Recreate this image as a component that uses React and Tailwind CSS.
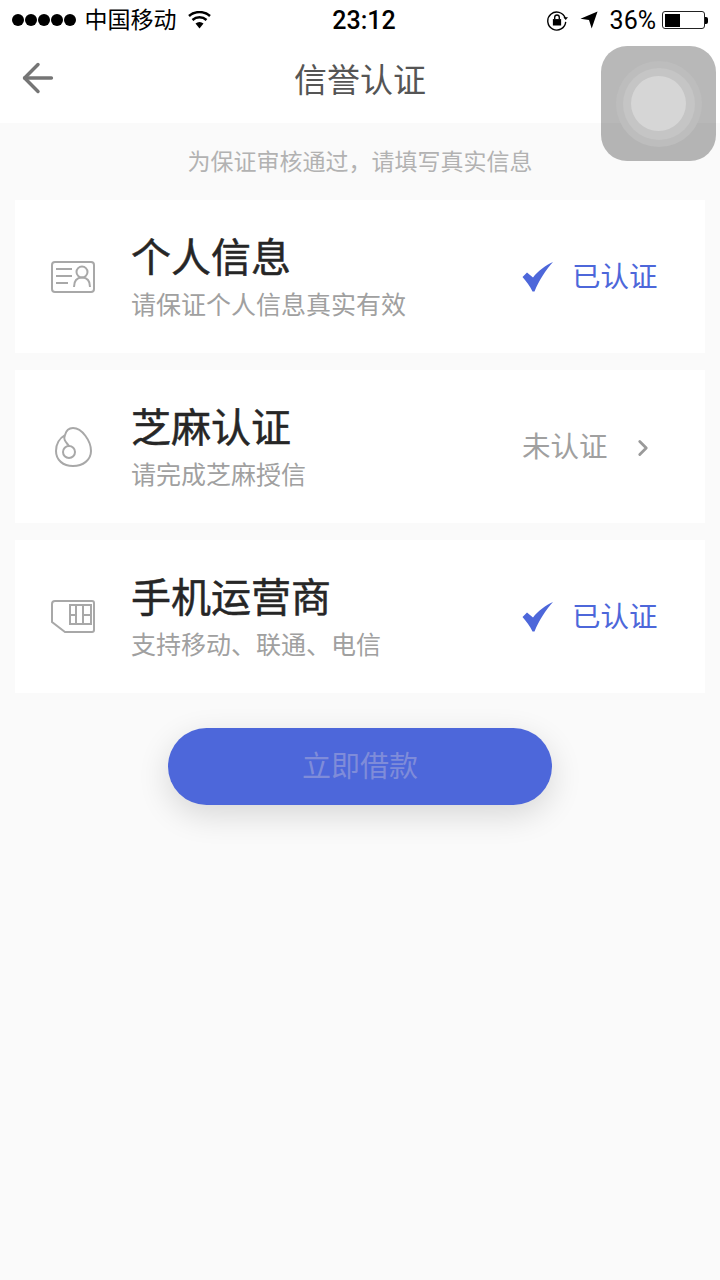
import React from "react";
import { ArrowLeft, ChevronRight } from "lucide-react";

const cjk = "font-['Roboto','Noto_Sans_CJK_SC',sans-serif]";

const IdIcon = () => (
  <svg width="44" height="32" viewBox="0 0 44 32" fill="none" stroke="#a8a8a8" strokeWidth="2">
    <rect x="1" y="1" width="42" height="30" rx="3" />
    <path d="M5 8h16M5 15h16M5 22h12" />
    <circle cx="31" cy="11" r="5.500" />
    <path d="M23 26c0-6 3-9.500 8-9.500s8 3.500 8 9.500" />
  </svg>
);

const SesameIcon = () => (
  <svg width="37" height="40" viewBox="0 0 37 40" fill="none" stroke="#a8a8a8" strokeWidth="2">
    <path d="M10 8C11 4 14 1 18 1C27 1 36 14 36 24C36 33 28 39 18 39C8 39 1 33 1 24C1 17 5 11 10 8C8 13 11 15 14 19" />
    <circle cx="14" cy="25" r="6" />
  </svg>
);

const SimIcon = () => (
  <svg width="44" height="33" viewBox="0 0 44 33" fill="none" stroke="#a8a8a8" strokeWidth="2">
    <path d="M4 1h37a2 2 0 0 1 2 2v27a2 2 0 0 1-2 2H14L1 22V4a3 3 0 0 1 3-3z" />
    <path d="M19 5h21v19H19zM25 5v19M32 5v19M19 15h6M32 15h8" />
  </svg>
);

const CheckIcon = () => (
  <svg className="-mt-[3px]" width="32" height="30" viewBox="0 0 32 30">
    <path d="M0.500 15L5 10.500L11 15.500C16 9 24 3 31 0C24 8 17 18 12.500 29.500L10.500 29.500C8 24 4 19 0.500 15z" fill="#4d67da" />
  </svg>
);

const Row = ({ icon, title, desc, done }) => (
  <div className="flex h-[153px] items-center bg-white">
    <div className="flex w-[116px] justify-center">{icon}</div>
    <div className="flex-1 pt-[2px]">
      <div className="text-[40px] leading-[50px] text-[#262626] [-webkit-text-stroke:0.5px_#262626]">{title}</div>
      <div className="mt-[7px] text-[25px] leading-[30px] text-[#a0a0a0]">{desc}</div>
    </div>
    {done ? (
      <div className="flex w-[183px] items-center pt-[3px]">
        <CheckIcon />
        <span className="ml-[18px] text-[28.500px] text-[#4d67da]">已认证</span>
      </div>
    ) : (
      <div className="flex w-[183px] items-center pt-[3px]">
        <span className="text-[28.500px] text-[#a0a0a0]">未认证</span>
        <ChevronRight className="ml-[22px]" size={26} color="#9a9a9a" strokeWidth={2.600} />
      </div>
    )}
  </div>
);

export default function App() {
  return (
    <div className={`relative flex min-h-[1280px] flex-col bg-[#fafafa] ${cjk}`}>
      {/* Status bar */}
      <div className="flex h-[40px] items-center justify-between bg-white px-[12px] text-black">
        <div className="flex w-[264px] items-center">
          <div className="flex gap-[1.500px]">
            {[0, 1, 2, 3, 4].map((i) => (
              <span key={i} className="h-[11.500px] w-[11.500px] rounded-full bg-black" />
            ))}
          </div>
          <span className="ml-[9px] text-[23px] leading-none">中国移动</span>
          <svg className="ml-[10px]" width="25" height="18" viewBox="0 0 25 18">
            <path d="M12.500 17.500L8.500 12.500a6 6 0 0 1 8 0z" fill="#000" />
            <path d="M5.500 9a10.500 10.500 0 0 1 14 0M2 5a16 16 0 0 1 21 0" fill="none" stroke="#000" strokeWidth="2.500" />
          </svg>
        </div>
        <span className="text-[25px] font-medium leading-none">23:12</span>
        <div className="flex w-[256px] items-center justify-end">
          <svg width="22" height="22" viewBox="0 0 24 24" fill="none" stroke="#000" strokeWidth="1.500">
            <path d="M21 10A9.800 9.800 0 1 0 21.500 14" />
            <path d="M19 9l2.500 3 2.500-3z" fill="#000" stroke="none" />
            <rect x="7.500" y="11" width="9" height="7" fill="#000" stroke="none" />
            <path d="M9.500 11V9a2.500 2.500 0 0 1 5 0v2" />
          </svg>
          <svg className="ml-[12px]" width="18" height="18" viewBox="0 0 20 20">
            <path d="M19.500 0.500L13 19.500L10 10L0.500 8.500z" fill="#000" />
          </svg>
          <span className="ml-[12px] text-[25px] leading-none">36%</span>
          <div className="ml-[6px] flex items-center">
            <div className="flex h-[18px] w-[43px] rounded-[3px] border border-[#222] p-[1.500px]">
              <div className="w-[15px] bg-black" />
            </div>
            <div className="h-[7px] w-[3px] rounded-r-[2px] bg-black" />
          </div>
        </div>
      </div>

      {/* Nav */}
      <div className="relative flex h-[83px] items-center justify-center bg-white pb-[2px]">
        <ArrowLeft className="absolute left-[15px] top-[15px]" size={46} color="#757575" strokeWidth={1.800} />
        <span className="text-[33px] text-[#555555]">信誉认证</span>
      </div>

      <div className="flex h-[77px] items-center justify-center pt-[3px] text-[23px] text-[#b2b2b2]">
        为保证审核通过，请填写真实信息
      </div>

      <div className="flex flex-col gap-[17px] px-[15px]">
        <Row icon={<IdIcon />} title="个人信息" desc="请保证个人信息真实有效" done />
        <Row icon={<SesameIcon />} title="芝麻认证" desc="请完成芝麻授信" />
        <Row icon={<SimIcon />} title="手机运营商" desc="支持移动、联通、电信" done />
      </div>

      <div className="mt-[35px] flex justify-center">
        <button className="flex h-[77px] w-[384px] items-center justify-center rounded-full bg-[#4d67da] pt-[3px] text-[29px] text-[#7f8cd9] shadow-[0_10px_32px_rgba(0,0,0,0.14)]">
          立即借款
        </button>
      </div>

      {/* Assistive touch */}
      <div className="absolute left-[601px] top-[46px] flex h-[115px] w-[115px] items-center justify-center rounded-[26px] bg-black/[0.28]">
        <div className="flex h-[86px] w-[86px] items-center justify-center rounded-full bg-[#bdbdbd]">
          <div className="flex h-[72px] w-[72px] items-center justify-center rounded-full bg-[#c5c5c5]">
            <div className="h-[55px] w-[55px] rounded-full bg-[#d6d6d6]" />
          </div>
        </div>
      </div>
    </div>
  );
}
